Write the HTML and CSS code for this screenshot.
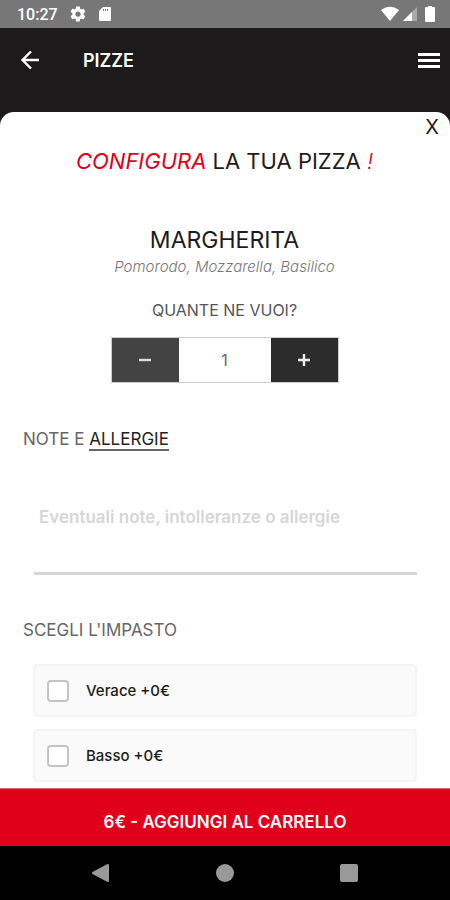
FILE: index.html
```html
<!DOCTYPE html>
<html lang="it">
<head>
<meta charset="utf-8">
<meta name="viewport" content="width=device-width, initial-scale=1">
<title>Pizze</title>
<link rel="stylesheet" href="styles.css">
</head>
<body>
<div class="status">
  <div class="status-group">
    <span class="clock">10:27</span>
    <svg width="18" height="18" viewBox="0 0 24 24" fill="#fff"><path fill-rule="evenodd" d="M19.4 13c.1-.7.1-1.300 0-2l2.100-1.600c.2-.2.200-.4.100-.6l-2-3.500c-.1-.2-.4-.3-.6-.2l-2.500 1c-.5-.4-1.100-.7-1.700-1L14.400 2.400c0-.2-.2-.4-.5-.4h-4c-.2 0-.4.200-.5.400L9 5.100c-.6.200-1.200.6-1.700 1l-2.500-1c-.2-.1-.5 0-.6.200l-2 3.500c-.1.200-.1.500.1.600L4.500 11c-.1.700-.1 1.300 0 2l-2.200 1.600c-.2.200-.2.400-.1.600l2 3.500c.1.200.4.300.6.200l2.500-1c.5.400 1.100.7 1.700 1l.4 2.700c0 .2.200.4.500.4h4c.2 0 .4-.2.500-.4l.4-2.700c.6-.2 1.200-.6 1.700-1l2.500 1c.2.100.5 0 .6-.2l2-3.500c.1-.2.100-.4-.1-.6zM12 15.500a3.500 3.500 0 1 1 0-7 3.500 3.500 0 0 1 0 7z"/></svg>
    <svg width="14" height="16" viewBox="0 0 14 16"><path fill="#fff" fill-rule="evenodd" d="M5 1h7q1 0 1 1v12q0 1-1 1H2q-1 0-1-1V5zM5 3v2h1V3zM7 3v2h1V3zM9 3v2h1V3z"/></svg>
  </div>
  <div class="status-group status-right">
    <svg width="20" height="16" viewBox="0 0 20 16"><path fill="#fff" d="M1 4Q10-2.500 19 4L10 15z"/></svg>
    <svg width="16" height="16" viewBox="0 0 16 16"><path fill="#a9a9a9" d="M15 1v14H1z"/><path fill="#fff" d="M10 6v9H1z"/></svg>
    <svg class="battery" width="12" height="18" viewBox="0 0 12 18"><path fill="#fff" d="M4 1h4v1h2q1 0 1 1v13q0 1-1 1H2q-1 0-1-1V3q0-1 1-1h2z"/></svg>
  </div>
</div>

<header class="bar">
  <button class="icon-button" aria-label="Indietro"><svg width="20" height="20" viewBox="0 0 20 20" fill="none" stroke="#fff" stroke-width="2.400"><path d="M19 10H3M11 1.500L2.500 10l8.500 8.500"/></svg></button>
  <h1 class="bar-title">PIZZE</h1>
  <button class="icon-button" aria-label="Menu"><svg width="22" height="16" viewBox="0 0 22 16" fill="#fff"><path d="M0 1h22v3H0zM0 7h22v3H0zM0 13h22v3H0z"/></svg></button>
</header>

<main class="sheet">
  <button class="close" aria-label="Chiudi">X</button>
  <h2 class="title"><em>CONFIGURA</em> LA TUA PIZZA <em class="mark">!</em></h2>
  <h3 class="name">MARGHERITA</h3>
  <p class="ingredients">Pomorodo, Mozzarella, Basilico</p>
  <label class="question" for="quantity">QUANTE NE VUOI?</label>
  <div class="stepper">
    <button class="minus" aria-label="Diminuisci"><svg width="12" height="12" viewBox="0 0 12 12"><path stroke="#ddd" stroke-width="2.400" d="M0 6h12"/></svg></button>
    <input id="quantity" type="text" inputmode="numeric" value="1">
    <button class="plus" aria-label="Aumenta"><svg width="12" height="12" viewBox="0 0 12 12"><path stroke="#eee" stroke-width="2.400" d="M0 6h12M6 0v12"/></svg></button>
  </div>
  <label class="section" for="notes">NOTE E <span class="allergy">ALLERGIE</span></label>
  <textarea id="notes" class="notes" placeholder="Eventuali note, intolleranze o allergie"></textarea>
  <fieldset class="doughs">
    <legend class="section">SCEGLI L'IMPASTO</legend>
    <label class="option"><input type="checkbox">Verace +0€</label>
    <label class="option"><input type="checkbox">Basso +0€</label>
  </fieldset>
</main>

<button class="cart">6€ - AGGIUNGI AL CARRELLO</button>

<nav class="system">
  <button aria-label="Indietro"><svg width="20" height="20" viewBox="0 0 20 20"><path fill="#999" stroke="#999" stroke-width="2" stroke-linejoin="round" d="M17 2v16L2 10z"/></svg></button>
  <button aria-label="Home"><svg width="20" height="20" viewBox="0 0 20 20"><circle cx="10" cy="10" r="9" fill="#999"/></svg></button>
  <button aria-label="Recenti"><svg width="20" height="20" viewBox="0 0 20 20"><rect x="1" y="1" width="18" height="18" rx="2" fill="#999"/></svg></button>
</nav>
</body>
</html>
```
FILE: styles.css
```css
* {
  box-sizing: border-box;
}

body {
  display: flex;
  flex-direction: column;
  min-height: 100vh;
  margin: 0;
  background: #1c1a1b;
  color: #1c1c1c;
  font-family: Inter, Roboto, sans-serif;
  font-size: 16px;
}

button,
input,
textarea {
  margin: 0;
  padding: 0;
  border: 0;
  border-radius: 0;
  background: none;
  color: inherit;
  font: inherit;
}

svg {
  display: block;
}

.status {
  display: flex;
  align-items: center;
  justify-content: space-between;
  height: 28px;
  padding: 0 14px 0 17px;
  background: #777;
}

.status-group {
  display: flex;
  align-items: center;
  gap: 11px;
}

.status-right {
  gap: 2px;
}

.battery {
  margin-left: 4px;
}

.clock {
  color: #fff;
  font: 500 16px/28px Roboto, sans-serif;
  padding-top: 2px;
}

.bar {
  display: flex;
  align-items: center;
  height: 84px;
  padding: 0 10px 20px 20px;
}

.bar-title {
  flex: 1;
  margin: 0;
  padding-left: 43px;
  color: #fff;
  font-size: 18px;
  font-weight: 600;
}

.sheet {
  display: flex;
  flex: 1;
  flex-direction: column;
  padding: 4px 24px 6px 23px;
  border-radius: 14px 14px 0 0;
  background: #fff;
}

.close {
  align-self: flex-end;
  margin-right: -13px;
  font-size: 20px;
  line-height: 22px;
}

.title,
.name {
  margin: 0;
  font-size: 22px;
  font-weight: 400;
  line-height: 28px;
  text-align: center;
}

.title {
  margin-top: 9px;
}

.title em {
  color: #e1001a;
}

.title .mark {
  font-weight: 300;
}

.name {
  margin-top: 51px;
  font-size: 23px;
}

.ingredients {
  margin: 1px 0 0;
  color: #777;
  font-size: 15px;
  font-style: italic;
  font-weight: 300;
  line-height: 24px;
  text-align: center;
}

.question {
  margin-top: 19px;
  color: #555;
  line-height: 24px;
  text-align: center;
}

.stepper {
  display: grid;
  grid-template-columns: 67px 92px 67px;
  align-self: center;
  height: 46px;
  margin-top: 15px;
  border: 1px solid #ccc;
}

.stepper button {
  display: grid;
  place-items: center;
}

.minus {
  background: #434343;
}

.plus {
  background: #2c2c2c;
}

.stepper input {
  width: 100%;
  color: #666;
  text-align: center;
}

.section {
  color: #666;
  font-size: 17px;
  line-height: 24px;
}

label.section {
  margin-top: 44px;
}

.allergy {
  border-bottom: 2px solid #666;
  color: #222;
}

.notes {
  height: 96px;
  margin: 28px 9px 0 11px;
  padding: 26px 5px 0;
  border-bottom: 3px solid #d6d6d6;
  font-size: 17px;
  line-height: 24px;
  outline: 0;
  resize: none;
}

.notes::placeholder {
  color: #d6d6d6;
  font-weight: 600;
  opacity: 1;
}

.doughs {
  display: flex;
  flex-direction: column;
  gap: 12px;
  min-width: 0;
  margin: 43px 0 0;
  padding: 0;
  border: 0;
}

.doughs .section {
  margin-bottom: 22px;
  padding: 0;
}

.option {
  display: flex;
  align-items: center;
  gap: 17px;
  height: 53px;
  margin: 0 9px 0 10px;
  padding-left: 12px;
  border: 2px solid #f4f4f4;
  border-radius: 4px;
  background: #fafafa;
  font-size: 15px;
  font-weight: 500;
}

.option input {
  width: 22px;
  height: 22px;
  border: 2px solid #c4c4c4;
  border-radius: 4px;
  background: #fff;
  appearance: none;
}

.option input:checked {
  background: #e1001a;
}

.cart {
  height: 58px;
  padding-top: 8px;
  border-top: 1px solid #e8606c;
  background: #e1001a;
  color: #fff;
  font-size: 17px;
  font-weight: 600;
}

.system {
  display: flex;
  justify-content: center;
  gap: 104px;
  height: 54px;
  background: #000;
}
```
